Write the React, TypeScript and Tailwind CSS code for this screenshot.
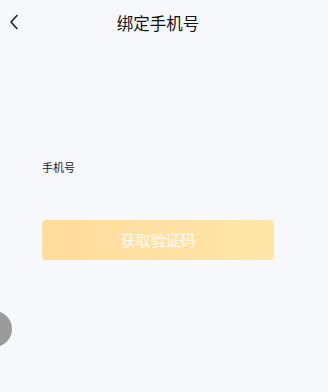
import React from "react";

export default function App() {
  return (
    <div
      className="relative h-[392px] w-[328px] overflow-hidden bg-[#f7f8fc]"
      style={{ fontFamily: '"Noto Sans CJK SC", "Noto Sans", sans-serif' }}
    >
      <div className="relative flex h-[46px] items-center justify-center pr-[12px]">
        <button className="absolute left-[7px] top-[13px] flex h-[18px] w-[14px] items-center justify-center">
          <svg width="10" height="16" viewBox="0 0 10 16" fill="none">
            <path d="M8 1.5L2 8l6 6.5" stroke="#1f1f1f" strokeWidth="1.6" strokeLinecap="round" strokeLinejoin="round" />
          </svg>
        </button>
        <h1 className="text-[16.5px] font-normal leading-none text-[#111]">绑定手机号</h1>
      </div>
      <div className="px-[42px] pt-[116px]">
        <div className="text-[11px] leading-none text-[#222]">手机号</div>
        <div className="h-[47px]" />
        <button className="flex h-[40px] w-[232px] items-center justify-center rounded-[4px] bg-gradient-to-r from-[#ffdb9c] to-[#ffe6a8] text-[15px] text-white/90">
          获取验证码
        </button>
      </div>
      <div className="absolute left-[-24px] top-[311px] h-[36px] w-[36px] rounded-full bg-[#9b9b9b]" />
    </div>
  );
}
